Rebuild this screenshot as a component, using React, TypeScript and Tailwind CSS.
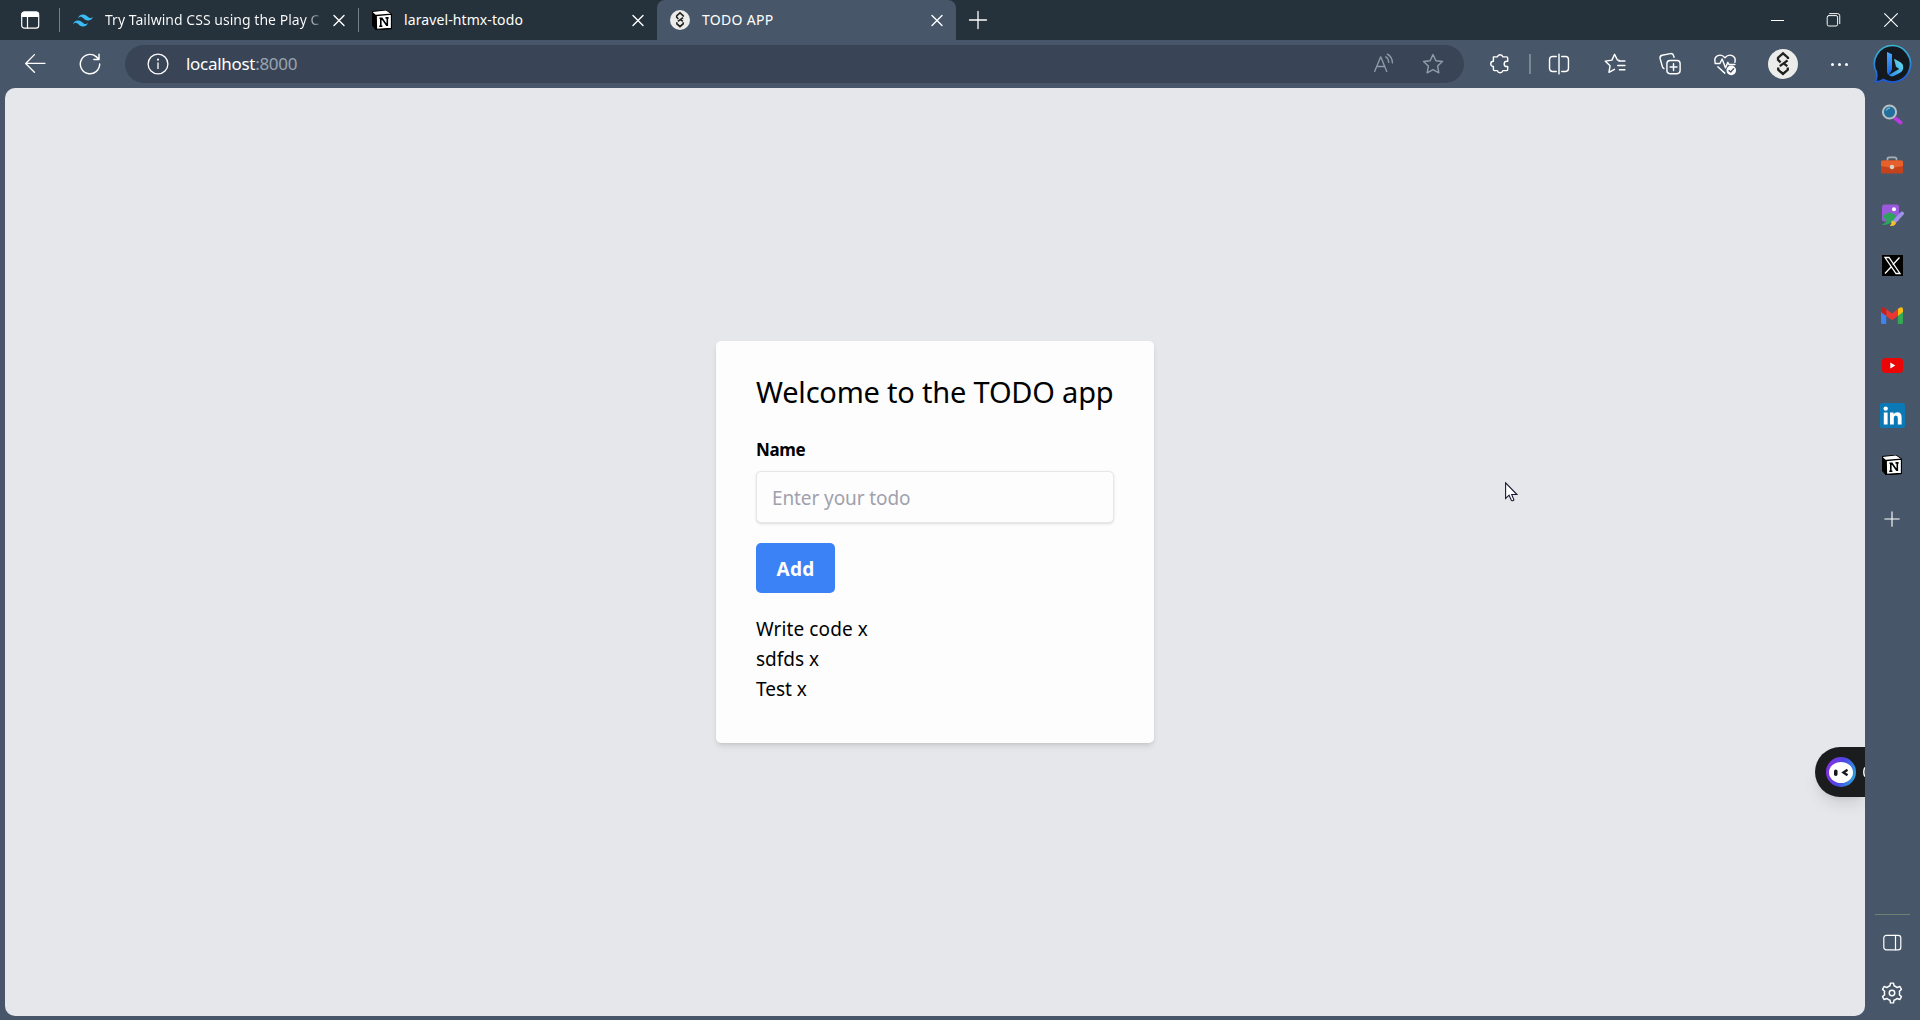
import React from "react";

type P = { children?: React.ReactNode; className?: string };

const Line = ({ s = 20, w = 1.3, children, className = "" }: P & { s?: number; w?: number }) => (
  <svg width={s} height={s} viewBox="0 0 20 20" fill="none" stroke="currentColor" strokeWidth={w} strokeLinecap="round" strokeLinejoin="round" className={`shrink-0 ${className}`}>
    {children}
  </svg>
);

const Close = () => (
  <Line s={20} w={1.4}>
    <path d="M5 5.5l10 10M15 5.5l-10 10" />
  </Line>
);

const Plus = ({ w = 1.3 }: { w?: number }) => (
  <Line w={w}>
    <path d="M10 1.5v17M1.5 10h17" />
  </Line>
);

const Knot = ({ s }: { s: number }) => (
  <svg width={s} height={s} viewBox="0 0 30 30" className="shrink-0">
    <circle cx="15" cy="15" r="15" fill="#ececea" />
    <g fill="none" stroke="#22231f" strokeWidth="2.3">
      <path d="M12.6 13.3L10 10.8V8.7L15 4.3l5 4.4v1.3" />
      <path d="M19.6 11.3L11.8 17.2M16.3 14.8l3 2.4" />
      <path d="M10.2 18.5v2.3l4.8 4.2 4.8-4.2v-2.3" />
    </g>
    <path d="M10 20l5 3.2 5-3.2-5 6z" fill="#22231f" />
  </svg>
);

const Notion = () => (
  <svg width="20" height="20" viewBox="0 0 20 20" className="shrink-0">
    <path d="M0 1.5L14 0l5.8 4v14.5L4 20 0 15.5z" fill="#fff" stroke="#000" strokeWidth="1" />
    <path d="M0 1.5l4.2 3.8V20L0 15.5z" fill="#000" />
    <path d="M4.2 5.5L19.5 4.2v14.1L4.5 19.3z" fill="#fff" stroke="#000" strokeWidth="1.3" />
    <path d="M7.5 8.2h2.4l5 7.3M8.8 8.3v7.8M7.2 16.2h3.2M13.5 7.9h3.1M15.3 8v8" fill="none" stroke="#000" strokeWidth="1.6" />
  </svg>
);

const Tailwind = () => (
  <svg width="20" height="13" viewBox="0 0 54 33" className="shrink-0">
    <path fill="#38bdf8" d="M27 0c-7.2 0-11.7 3.6-13.5 10.8 2.7-3.6 5.85-4.95 9.45-4.05 2.054.513 3.522 2.004 5.147 3.653C30.744 13.09 33.808 16.2 40.5 16.2c7.2 0 11.7-3.6 13.5-10.8-2.7 3.6-5.85 4.95-9.45 4.05-2.054-.513-3.522-2.004-5.147-3.653C36.756 3.11 33.692 0 27 0zM13.5 16.2C6.3 16.2 1.8 19.8 0 27c2.7-3.6 5.85-4.95 9.45-4.05 2.054.514 3.522 2.004 5.147 3.653C17.244 29.29 20.308 32.4 27 32.4c7.2 0 11.7-3.6 13.5-10.8-2.7 3.6-5.85 4.95-9.45 4.05-2.054-.513-3.522-2.004-5.147-3.653C23.256 19.31 20.192 16.2 13.5 16.2z" />
  </svg>
);

const star = "M10 1.4l2.6 5.6 6 .8-4.4 4.1 1.1 6.1-5.3-2.9-5.3 2.9 1.1-6.1L1.4 7.8l6-.8z";

function TabBar() {
  return (
    <div className="flex h-10 bg-[#26323b] text-[14px] text-white">
      <div className="flex w-[59px] items-center justify-center">
        <Line w={1.2} s={20}>
          <rect x="1.7" y="2.2" width="17" height="16" rx="2.6" />
          <path d="M2 4.5Q2 2 4.5 2h11.4q2.5 0 2.5 2.5v2H2z" fill="currentColor" />
          <path d="M7.5 6v12" />
        </Line>
      </div>
      <div className="my-2 w-px bg-[#75808b]" />
      <div className="flex w-[298px] items-center pl-[13px] pr-[9px]">
        <Tailwind />
        <span className="ml-3 pb-px whitespace-nowrap bg-linear-to-r from-white from-93% to-white/30 bg-clip-text text-transparent tracking-[0.03px]">
          Try Tailwind CSS using the Play C
        </span>
        <div className="ml-auto"><Close /></div>
      </div>
      <div className="my-2 w-px bg-[#75808b]" />
      <div className="flex w-[298px] items-center pl-[13px] pr-[9px]">
        <Notion />
        <span className="ml-3 pb-px tracking-[0.1px]">laravel-htmx-todo</span>
        <div className="ml-auto"><Close /></div>
      </div>
      <div className="flex w-[299px] items-center rounded-t-lg bg-[#475769] pl-[13px] pr-[9px]">
        <Knot s={20} />
        <span className="ml-[12px] pb-px tracking-[0.3px]">TODO APP</span>
        <div className="ml-auto"><Close /></div>
      </div>
      <div className="flex w-11 items-center justify-center"><Plus /></div>
      <div className="ml-auto flex items-center">
        <div className="flex w-14 justify-center"><div className="h-px w-[13px] bg-white" /></div>
        <div className="flex w-[57px] justify-center">
          <Line w={1.2} s={16}>
            <rect x="1.5" y="4.5" width="13" height="13" rx="2" />
            <path d="M4.5 2h10q2.7 0 2.7 2.7v9.8" />
          </Line>
        </div>
        <div className="flex w-[58px] justify-center">
          <Line w={1.4} s={16}><path d="M2 2l16 16M18 2L2 18" /></Line>
        </div>
      </div>
    </div>
  );
}

const Slot = ({ children, className = "" }: P) => (
  <div className={`flex shrink-0 items-center justify-center ${className}`}>{children}</div>
);

const Bing = () => (
  <svg width="40" height="40" viewBox="0 0 40 40">
    <defs>
      <linearGradient id="ring" x1="0" y1="0" x2="0" y2="1">
        <stop offset="0" stopColor="#38b9d5" />
        <stop offset="1" stopColor="#1d59d8" />
      </linearGradient>
      <linearGradient id="b1" x1="0" y1="0" x2="0" y2="1">
        <stop offset="0" stopColor="#4aa8ff" />
        <stop offset="1" stopColor="#1767e2" />
      </linearGradient>
      <linearGradient id="b2" x1="0" y1="1" x2="1" y2="0">
        <stop offset="0" stopColor="#2487ef" />
        <stop offset="1" stopColor="#6ee6e8" />
      </linearGradient>
    </defs>
    <path d="M20 1.5A18.3 18.3 0 1 1 10 35.6Q6.5 38 2.3 37.5 4.5 34 3.3 28A18.3 18.3 0 0 1 20 1.5z" fill="#14191f" stroke="url(#ring)" strokeWidth="1.7" />
    <path d="M14 8l5 2.2v15.3L15.8 31Q14 29.7 14 27.5z" fill="url(#b1)" />
    <path d="M21 14.8l6 3.2q3.6 2.2 3.2 6-.5 3.7-4 5.3l-5.4 2.8q-3 1-5-1.1l10.4-6-3.2-2.2z" fill="url(#b2)" />
  </svg>
);

function Toolbar() {
  return (
    <div className="flex h-12 items-center bg-[#475769] text-white">
      <Slot className="w-[70px]">
        <Line s={22} w={1.2}><path d="M19 9.5H1.5M9.5 1.5L1.5 9.5l8 8" /></Line>
      </Slot>
      <Slot className="w-[40px]">
        <Line s={22}><path d="M18.8 10A8.8 8.8 0 1 1 15.6 3.3L18 5.7M18.2 1.2v4.7h-4.7" /></Line>
      </Slot>
      <div className="ml-[15px] flex h-[38px] w-[1339px] items-center rounded-full bg-[#394556] pl-[22px] pr-[20px]">
        <Line s={22} w={1.2}>
          <circle cx="10" cy="10" r="9" />
          <path d="M10 9v5" />
          <path d="M10 6v.1" strokeWidth="1.8" />
        </Line>
        <span className="ml-[17px] pb-px text-[17px] tracking-[-0.3px]">localhost<span className="text-[#9aa4b0]">:8000</span></span>
        <div className="ml-auto flex items-center gap-[27px] text-[#929ca8]">
          <Line s={22} w={1.2}>
            <path d="M1.5 16.8L7 3.5l5.5 13.3M3.3 12.3h7.4M11.5 3.5Q14 4.5 14.3 8.5M13 1q4.5 2.3 4.7 8" />
          </Line>
          <Line s={22}><path d={star} /></Line>
        </div>
      </div>
      <Slot className="ml-[7px] w-[57px]">
        <Line s={22} className="overflow-visible">
          <path d="M4 3.5h3.6a2.6 2.6 0 0 1 5 0H16q1 0 1 1v3h-.8a2.4 2.4 0 0 0 0 4.8h.8V15q0 1-1 1h-3.4a2.6 2.6 0 0 1-5 0H5q-1 0-1-1v-2.7a2.4 2.4 0 0 1 0-4.800z" />
        </Line>
      </Slot>
      <div className="ml-px h-5 w-[1.5px] bg-[#7c8794]" />
      <Slot className="w-14">
        <Line s={22}><path d="M10 1v18M7.5 3.2H4a2.6 2.6 0 0 0-2.6 2.6v8.4A2.6 2.6 0 0 0 4 16.8h3.5M12.5 3.2H16a2.6 2.6 0 0 1 2.6 2.6v8.4a2.6 2.6 0 0 1-2.6 2.6h-3.5" /></Line>
      </Slot>
      <Slot className="w-14">
        <Line s={22}><path d="M14 6.7l-1.8-.3L9.6 1.2 7.2 6.5l-6 .9 4.3 4.2-1 6 5-2.8M13.5 7.3H19M12.5 11.3H19M14 15.2h5" /></Line>
      </Slot>
      <Slot className="w-[55px]">
        <Line s={22} className="overflow-visible">
          <rect x="7.2" y="6.8" width="12" height="12" rx="2.8" />
          <path d="M13.2 9.7v6.2M10.1 12.8h6.2M4.5 14.2Q3.4 13.7 3 12.2L1 5q-.5-2.3 1.8-3l7.6-1.4q2.3-.4 2.9 1.9l.4 1.3" />
        </Line>
      </Slot>
      <Slot className="w-[55px]">
        <Line s={22} className="overflow-visible">
          <path d="M1 8.5C-.5 2.4 6-.2 10 4.3 14-.2 20.5 2.4 19 8.5M1 9.5h4.4l2-4 3 8 2.2-5 1 2H19M3.5 12.5l6.3 5.8" />
          <circle cx="15.7" cy="15.8" r="3.7" fill="white" />
          <path d="M13.7 16l1.5 1.3 2.6-2.9" stroke="#475769" />
        </Line>
      </Slot>
      <Slot className="w-[60px]"><Knot s={30} /></Slot>
      <Slot className="w-[54px] gap-[4px]">
        {[0, 1, 2].map((i) => <span key={i} className="size-[3px] rounded-full bg-white" />)}
      </Slot>
      <Slot className="w-[52px]"><Bing /></Slot>
    </div>
  );
}

const Side = ({ children, className = "" }: P) => (
  <div className={`flex h-[50px] shrink-0 items-center justify-center ${className}`}>{children}</div>
);

function Sidebar() {
  return (
    <aside className="flex w-[55px] flex-col bg-[#475769] pt-[2px] pr-px text-white">
      <Side>
        <svg width="22" height="22" viewBox="0 0 22 22">
          <path d="M14.5 14.5l5 4" stroke="#b93be0" strokeWidth="4" strokeLinecap="round" />
          <circle cx="8.5" cy="8" r="6.6" fill="#236f9c" stroke="#b9c0c4" strokeWidth="2" />
          <path d="M5 6.5Q6.5 4 9 4" stroke="#6ab9d8" strokeWidth="1.3" fill="none" />
        </svg>
      </Side>
      <Side>
        <svg width="22" height="18" viewBox="0 0 22 18">
          <path d="M6.5 5V3q0-1.7 1.7-1.7h5.6q1.7 0 1.7 1.7v2" fill="none" stroke="#a9afb5" strokeWidth="1.7" />
          <rect y="4.5" width="22" height="13" rx="1.5" fill="#c4431d" />
          <path d="M0 6q0-1.5 1.5-1.5h19Q22 4.5 22 6v4l-11 2L0 10z" fill="#e6602b" />
          <circle cx="11" cy="11" r="2.2" fill="#d9d3cd" />
        </svg>
      </Side>
      <Side>
        <svg width="23" height="23" viewBox="0 0 23 23">
          <rect x="1" y=".5" width="17" height="17" rx="2.5" fill="#9b59dc" />
          <circle cx="13" cy="5.2" r="2" fill="#fff" />
          <path d="M1.5 13Q8 4.5 15.5 12L11 18Q6 22 .5 20.5q5-1.5 5-4z" fill="#2da45c" />
          <path d="M21 9.5l-7.5 8" stroke="#9d92e8" strokeWidth="4" strokeLinecap="round" />
          <path d="M10.5 16.5l4.3 1.5q.5 4.5-6 4 2-2 1.7-5.5z" fill="#f4c132" />
        </svg>
      </Side>
      <Side>
        <svg width="21" height="21" viewBox="0 0 21 21">
          <rect width="21" height="21" fill="#000" />
          <path d="M3 2.5h4l11 16h-4zM17.5 2.5l-6.7 7.3M3 18.5l6.7-7.2" fill="none" stroke="#fff" strokeWidth="1.3" />
        </svg>
      </Side>
      <Side>
        <svg width="22" height="17" viewBox="0 0 22 17">
          <path d="M0 4.5L5.2 8v9H1.5Q0 17 0 15.5z" fill="#3f83ee" />
          <path d="M22 4.5L16.8 8v9h3.7q1.5 0 1.5-1.5z" fill="#35a853" />
          <path d="M16.8 2L19 .4Q22-.6 22 2.5V5l-5.2 4z" fill="#f8bc15" />
          <path d="M5.2 2L11 6.4 16.8 2v7L11 13.3 5.2 9z" fill="#e8382f" />
          <path d="M5.2 2L3 .4Q0-.6 0 2.5V5l5.2 4z" fill="#c5221f" />
        </svg>
      </Side>
      <Side>
        <svg width="21" height="15" viewBox="0 0 21 15">
          <rect width="21" height="15" rx="3.5" fill="#eb0505" />
          <path d="M8.3 4.5v6l5-3z" fill="#fff" />
        </svg>
      </Side>
      <Side>
        <svg width="25" height="25" viewBox="0 0 25 25">
          <rect width="25" height="25" rx="2" fill="#0a79b5" />
          <circle cx="5.7" cy="5.6" r="2.2" fill="#fff" />
          <path d="M3.8 9.5h3.8v12H3.8zM10 9.5h3.6v1.7q1.2-2 3.7-2 4.3 0 4.3 5v7.3h-3.8v-6.6q0-2.5-1.9-2.5-2.1 0-2.1 2.6v6.5H10z" fill="#fff" />
        </svg>
      </Side>
      <Side><Notion /></Side>
      <Side className="mt-[4px]">
        <Line s={16} w={1.4}><path d="M10 1v18M1 10h18" /></Line>
      </Side>
      <div className="mx-auto mt-auto h-px w-[35px] bg-[#6f8272]" />
      <Side className="mt-[3px]">
        <Line s={20} w={1.2} className="overflow-visible"><rect x="1.8" y="2.3" width="17" height="14.5" rx="2.6" /><path d="M13.5 2.3v14.5" /></Line>
      </Side>
      <Side className="mb-[2px]">
        <Line s={22} w={1.3}>
          <path d="M8.2 3.4L8.6 1h2.8l.4 2.4q1.5.5 2.7 1.6l2.7-.9 1.4 2.6-1.9 1.7q.4 1.6 0 3.2l1.9 1.7-1.4 2.6-2.7-.9q-1.2 1.1-2.7 1.6l-.4 2.4H8.6l-.4-2.4Q6.7 16.1 5.5 15l-2.7.9-1.4-2.6 1.9-1.7q-.4-1.6 0-3.2L1.4 6.7l1.4-2.6 2.7.9q1.2-1.1 2.7-1.6z" />
          <circle cx="10" cy="10" r="2.5" />
        </Line>
      </Side>
    </aside>
  );
}

function TodoCard() {
  return (
    <div className="flex h-[402px] w-[438px] flex-col rounded-[5px] bg-[#fdfdfd] px-10 pt-[31px] text-black shadow-md">
      <h1 className="h-10 whitespace-nowrap text-[29px] leading-10 tracking-[-0.2px]">Welcome to the TODO app</h1>
      <label className="mt-[26px] h-6 text-[17px] leading-6 font-bold tracking-[-0.4px]">Name</label>
      <input
        placeholder="Enter your todo"
        className="mt-[9px] h-[52px] rounded-[5px] border border-gray-200 bg-[#fdfdfd] px-[15px] pt-[2px] text-[19px] tracking-[-0.1px] shadow-sm placeholder:text-[#a0a1ac]"
      />
      <button className="mt-5 h-[50px] w-[79px] rounded-[5px] bg-[#3b82f6] pt-[2px] text-[19px] font-bold tracking-[0.2px] text-white">Add</button>
      <ul className="mt-[21px] text-[19px] leading-[30px]">
        <li className="tracking-[0.1px]">Write code x</li>
        <li>sdfds x</li>
        <li>Test x</li>
      </ul>
    </div>
  );
}

export default function App() {
  return (
    <div className="relative flex h-[1020px] w-[1920px] flex-col overflow-hidden bg-[#475769] font-['Noto_Sans',sans-serif]">
      <TabBar />
      <Toolbar />
      <div className="flex min-h-0 flex-1">
        <main className="relative mb-1 ml-[5px] flex flex-1 items-center justify-center overflow-hidden rounded-[10px] bg-[#e5e7eb] pb-5">
          <TodoCard />
          <div className="absolute top-[659px] right-0 flex h-[50px] w-[50px] items-center overflow-hidden rounded-l-full bg-[#1b1c1e] pl-[11px] shadow-lg">
            <svg width="30" height="30" viewBox="0 0 30 30" className="shrink-0">
              <defs>
                <linearGradient id="bot" x1="0" y1=".4" x2="1" y2=".7">
                  <stop offset="0" stopColor="#8530e0" />
                  <stop offset=".5" stopColor="#4b48e8" />
                  <stop offset="1" stopColor="#28a7d8" />
                </linearGradient>
              </defs>
              <circle cx="15" cy="15" r="15" fill="url(#bot)" />
              <ellipse cx="15" cy="15.5" rx="12" ry="10.5" fill="#fff" />
              <rect x="8" y="12.5" width="3.5" height="6.5" rx="1.7" fill="#17171c" />
              <path d="M21.5 12.8l-4 2.7 4 2.7" stroke="#17171c" strokeWidth="2.4" fill="none" />
            </svg>
            <svg width="2" height="12" viewBox="0 0 2 12" className="ml-[7px] shrink-0">
              <path d="M2 1.5Q.8 3 .8 6T2 10.5" fill="none" stroke="#fff" strokeWidth="1.5" />
            </svg>
          </div>
        </main>
        <Sidebar />
      </div>
      <svg width="13" height="20" viewBox="0 0 13 20" className="absolute top-[482px] left-[1505px]">
        <path d="M.6.8v15.7l3.5-3.3 2.3 5.2q1.2 1 2.5-.6L6.7 12.5h5.2z" fill="#fff" stroke="#191a33" strokeWidth="1.1" />
      </svg>
    </div>
  );
}
